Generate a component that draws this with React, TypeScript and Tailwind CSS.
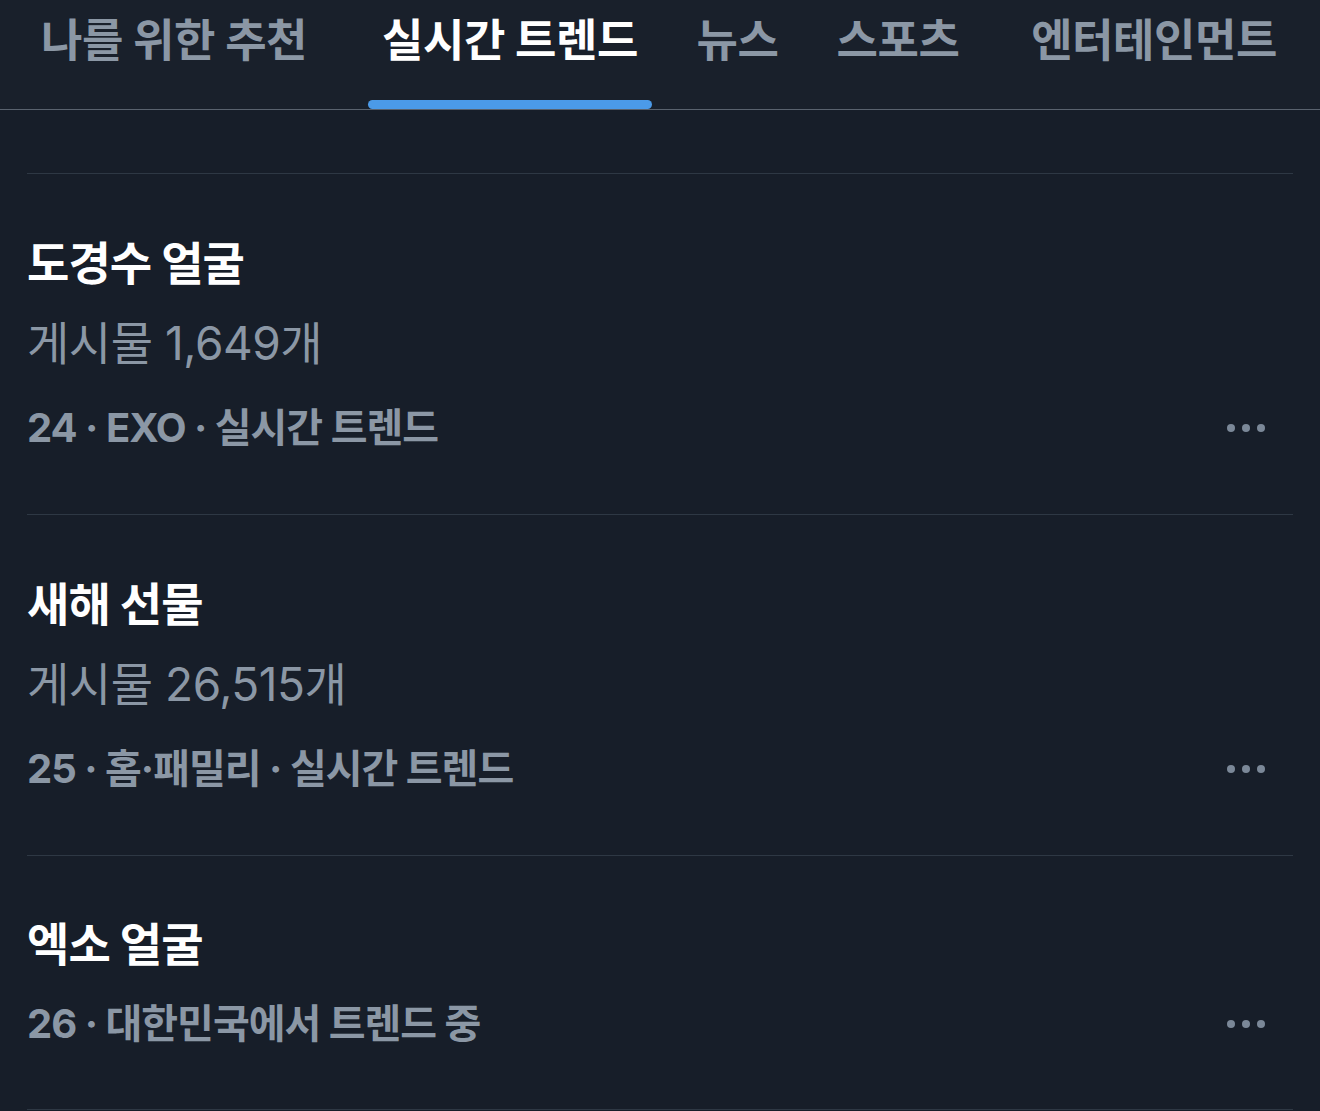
import React from "react";

const FONT = { fontFamily: 'Inter, "Noto Sans CJK KR", sans-serif' };

function Dots() {
  return (
    <div className="flex items-center gap-[6.5px] mr-[28px]">
      <span className="w-[8.5px] h-[8.5px] rounded-full bg-[#7b8898]" />
      <span className="w-[8.5px] h-[8.5px] rounded-full bg-[#7b8898]" />
      <span className="w-[8.5px] h-[8.5px] rounded-full bg-[#7b8898]" />
    </div>
  );
}

type Trend = { title: string; count?: string; meta: string; pt: number; pb: number };

function TrendItem({ t }: { t: Trend }) {
  return (
    <div style={{ paddingTop: t.pt, paddingBottom: t.pb }}>
      <div className="h-[80px] flex items-center text-[46px] font-bold text-white tracking-[-0.02em]">
        {t.title}
      </div>
      {t.count && (
        <div className="h-[80px] flex items-center text-[46px] font-normal text-[#8b97a5] tracking-[-0.01em]">
          {t.count}
        </div>
      )}
      <div
        className={`${t.count ? "mt-[5px]" : ""} h-[80px] flex items-center justify-between text-[40px] font-bold text-[#8b97a5] tracking-[-0.025em]`}
      >
        <span>{t.meta}</span>
        <Dots />
      </div>
    </div>
  );
}

function Tab({ label, ml, w, active }: { label: string; ml: number; w: number; active?: boolean }) {
  return (
    <div className="flex flex-col items-center" style={{ marginLeft: ml, width: w }}>
      <div
        className={`h-[100px] flex items-center text-[45px] font-bold tracking-[-0.01em] pb-[18px] whitespace-nowrap ${
          active ? "text-white" : "text-[#8b97a5]"
        }`}
      >
        {label}
      </div>
      {active && <div className="h-[9px] w-full rounded-full bg-[#4b9ae8]" />}
    </div>
  );
}

export default function App() {
  const trends: Trend[] = [
    { title: "도경수 얼굴", count: "게시물 1,649개", meta: "24 · EXO · 실시간 트렌드", pt: 49, pb: 46 },
    { title: "새해 선물", count: "게시물 26,515개", meta: "25 · 홈·패밀리 · 실시간 트렌드", pt: 49, pb: 46 },
    { title: "엑소 얼굴", meta: "26 · 대한민국에서 트렌드 중", pt: 48, pb: 45 },
  ];
  return (
    <div className="w-[1320px] h-[1111px] overflow-hidden bg-[#171e29]" style={FONT}>
      <div className="h-[110px] border-b border-[#59626e] bg-[#19202b] flex">
        <Tab label="나를 위한 추천" ml={28} w={292} />
        <Tab label="실시간 트렌드" ml={48} w={284} active />
        <Tab label="뉴스" ml={28} w={115} />
        <Tab label="스포츠" ml={25} w={156} />
        <Tab label="엔터테인먼트" ml={34} w={288} />
      </div>
      <div className="mx-[27px] mt-[63px]">
        {trends.map((t, i) => (
          <div key={i} className="border-t border-[#2e3844]">
            <TrendItem t={t} />
          </div>
        ))}
        <div className="border-t border-[#2e3844]" />
      </div>
    </div>
  );
}
